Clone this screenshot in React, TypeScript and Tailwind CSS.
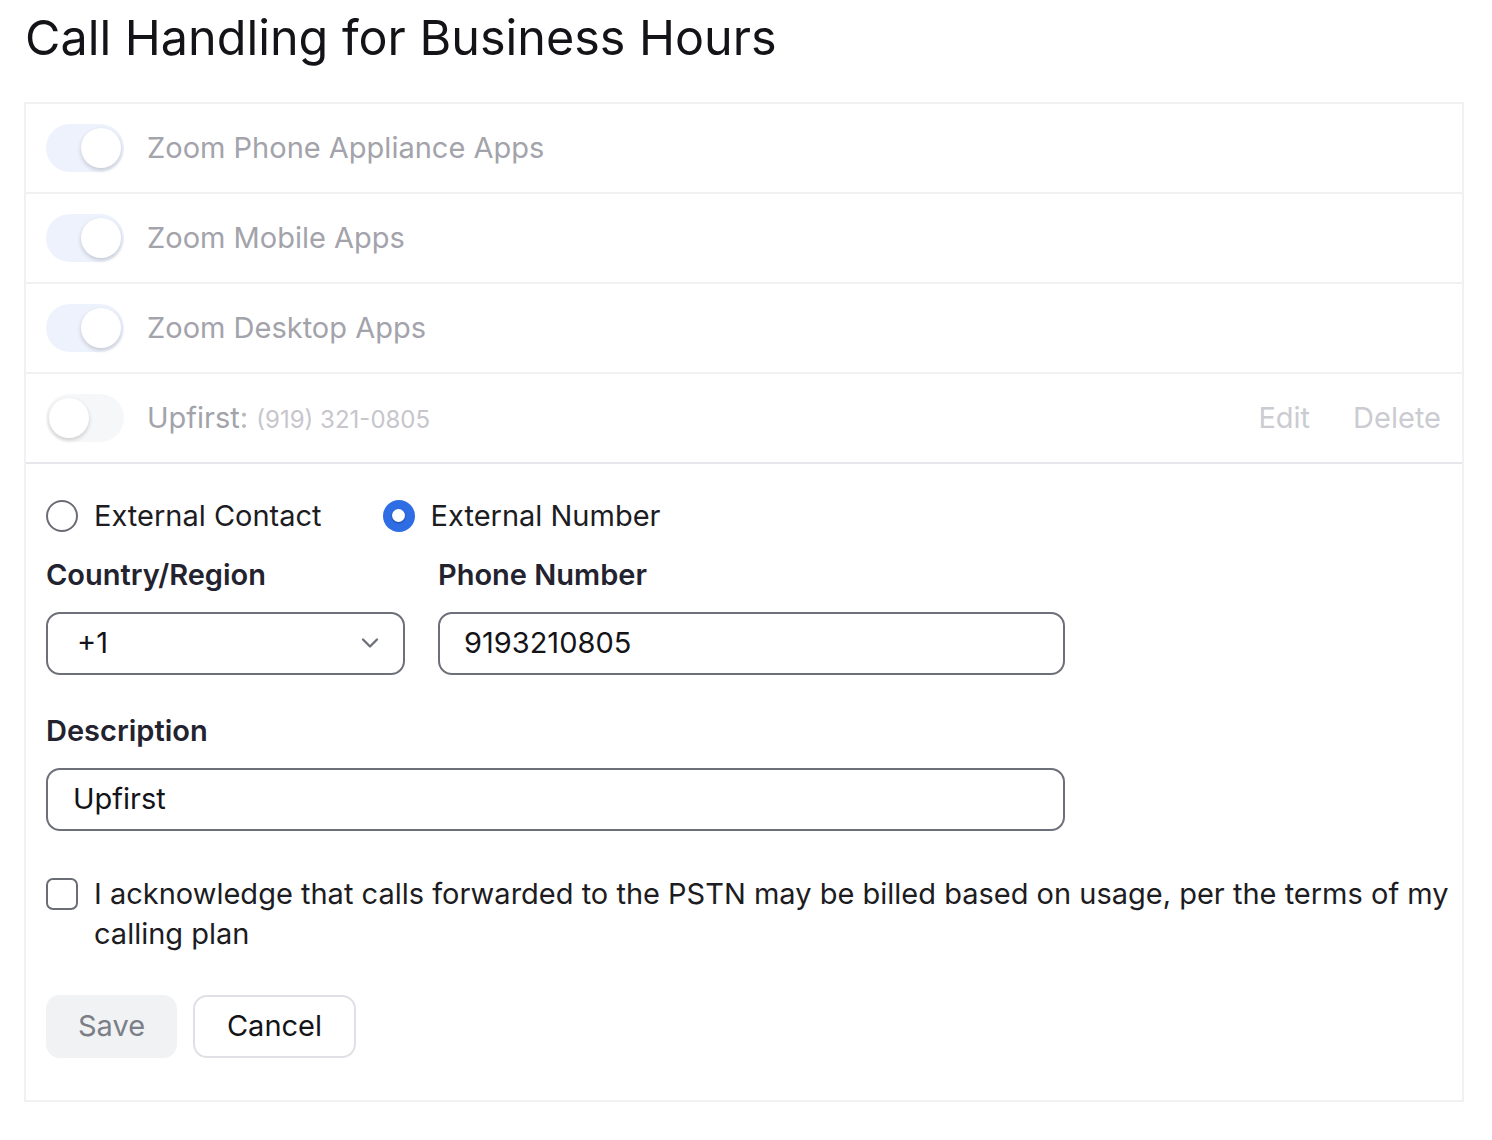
import { ChevronDown } from "lucide-react";

const APPS = ["Zoom Phone Appliance Apps", "Zoom Mobile Apps", "Zoom Desktop Apps"];

function Toggle({ on }: { on: boolean }) {
  return (
    <div
      className={`relative h-[48px] w-[78px] shrink-0 rounded-full ${on ? "bg-[#edf2fd]" : "bg-[#f6f7f8]"}`}
    >
      <span
        className={`absolute top-[4px] h-[40px] w-[40px] rounded-full bg-white shadow-[0_2px_4px_rgba(0,0,0,0.18)] ${
          on ? "left-[35px]" : "left-[3px]"
        }`}
      />
    </div>
  );
}

export default function App() {
  return (
    <div className="min-h-[1140px] bg-white px-[24px] pt-[8px] font-['Inter','Liberation_Sans',sans-serif]">
      <h1 className="text-[48.5px] leading-[60px] font-normal text-[#131318] ml-[1px]">
        Call Handling for Business Hours
      </h1>

      <div className="mt-[34px] w-[1440px] border-2 border-[#f1f1f3]">
        {/* app rows */}
        {APPS.map((name) => (
          <div key={name} className="flex h-[90px] items-center gap-[23px] border-b-2 border-[#f1f1f3] px-[20px]">
            <Toggle on />
            <span className="text-[29px] text-[#a3a3ab]">{name}</span>
          </div>
        ))}
        <div className="flex h-[90px] items-center gap-[23px] border-b-2 border-[#e6e6ec] px-[20px]">
          <Toggle on={false} />
          <span className="text-[29px] text-[#a3a3ab]">
            Upfirst<span className="text-[#b7b7bd]">:</span>{" "}
            <span className="text-[24px] text-[#c6c6cc]">(919) 321-0805</span>
          </span>
          <div className="ml-auto flex gap-[43px] pr-[1px] text-[29px] text-[#cbccd1]">
            <span>Edit</span>
            <span>Delete</span>
          </div>
        </div>

        {/* form */}
        <div className="pl-[20px] pr-[10px] pt-[30px] pb-[42px]">
          <div className="flex items-center">
            <label className="flex items-center gap-[16px]">
              <span className="h-[32px] w-[32px] rounded-full border-2 border-[#6b6d76]" />
              <span className="text-[29px] text-[#1c1c22]">External Contact</span>
            </label>
            <label className="ml-[61px] flex items-center gap-[16px]">
              <span className="flex h-[32px] w-[32px] items-center justify-center rounded-full bg-[#2e6de3]">
                <span className="h-[13px] w-[13px] rounded-full bg-white shadow-[0_1px_2px_rgba(0,0,0,0.35)]" />
              </span>
              <span className="text-[29px] text-[#1c1c22]">External Number</span>
            </label>
          </div>

          <div className="mt-[17px] flex gap-[33px]">
            <div className="w-[359px]">
              <div className="text-[29px] leading-[40px] font-semibold text-[#23232f]">Country/Region</div>
              <div className="mt-[17px] flex h-[63px] items-center justify-between rounded-[14px] border-2 border-[#6e7079] pl-[29px] pr-[19px]">
                <span className="text-[29px] text-[#141418]">+1</span>
                <ChevronDown className="h-[28px] w-[28px] text-[#6e7079]" strokeWidth={2} />
              </div>
            </div>
            <div className="w-[627px]">
              <div className="text-[29px] leading-[40px] font-semibold text-[#23232f]">Phone Number</div>
              <div className="mt-[17px] flex h-[63px] items-center rounded-[14px] border-2 border-[#6e7079] px-[24px]">
                <span className="text-[29px] text-[#141418]">9193210805</span>
              </div>
            </div>
          </div>

          <div className="mt-[36px] text-[29px] leading-[40px] font-semibold text-[#23232f]">Description</div>
          <div className="mt-[17px] flex h-[63px] w-[1019px] items-center rounded-[14px] border-2 border-[#6e7079] px-[25px]">
            <span className="text-[29px] text-[#141418]">Upfirst</span>
          </div>

          <div className="mt-[43px] flex gap-[16px]">
            <span className="mt-[4px] h-[32px] w-[32px] shrink-0 rounded-[7px] border-2 border-[#6b6d76]" />
            <p className="text-[29px] leading-[40px] text-[#1c1c22]">
              I acknowledge that calls forwarded to the PSTN may be billed based on usage, per the terms of my calling plan
            </p>
          </div>

          <div className="mt-[41px] flex gap-[16px]">
            <button className="h-[63px] w-[131px] rounded-[14px] bg-[#f1f2f4] text-[29px] text-[#7c7f88]">Save</button>
            <button className="h-[63px] w-[163px] rounded-[14px] border-2 border-[#dfe1e6] bg-white text-[29px] text-[#141418]">
              Cancel
            </button>
          </div>
        </div>
      </div>
    </div>
  );
}
